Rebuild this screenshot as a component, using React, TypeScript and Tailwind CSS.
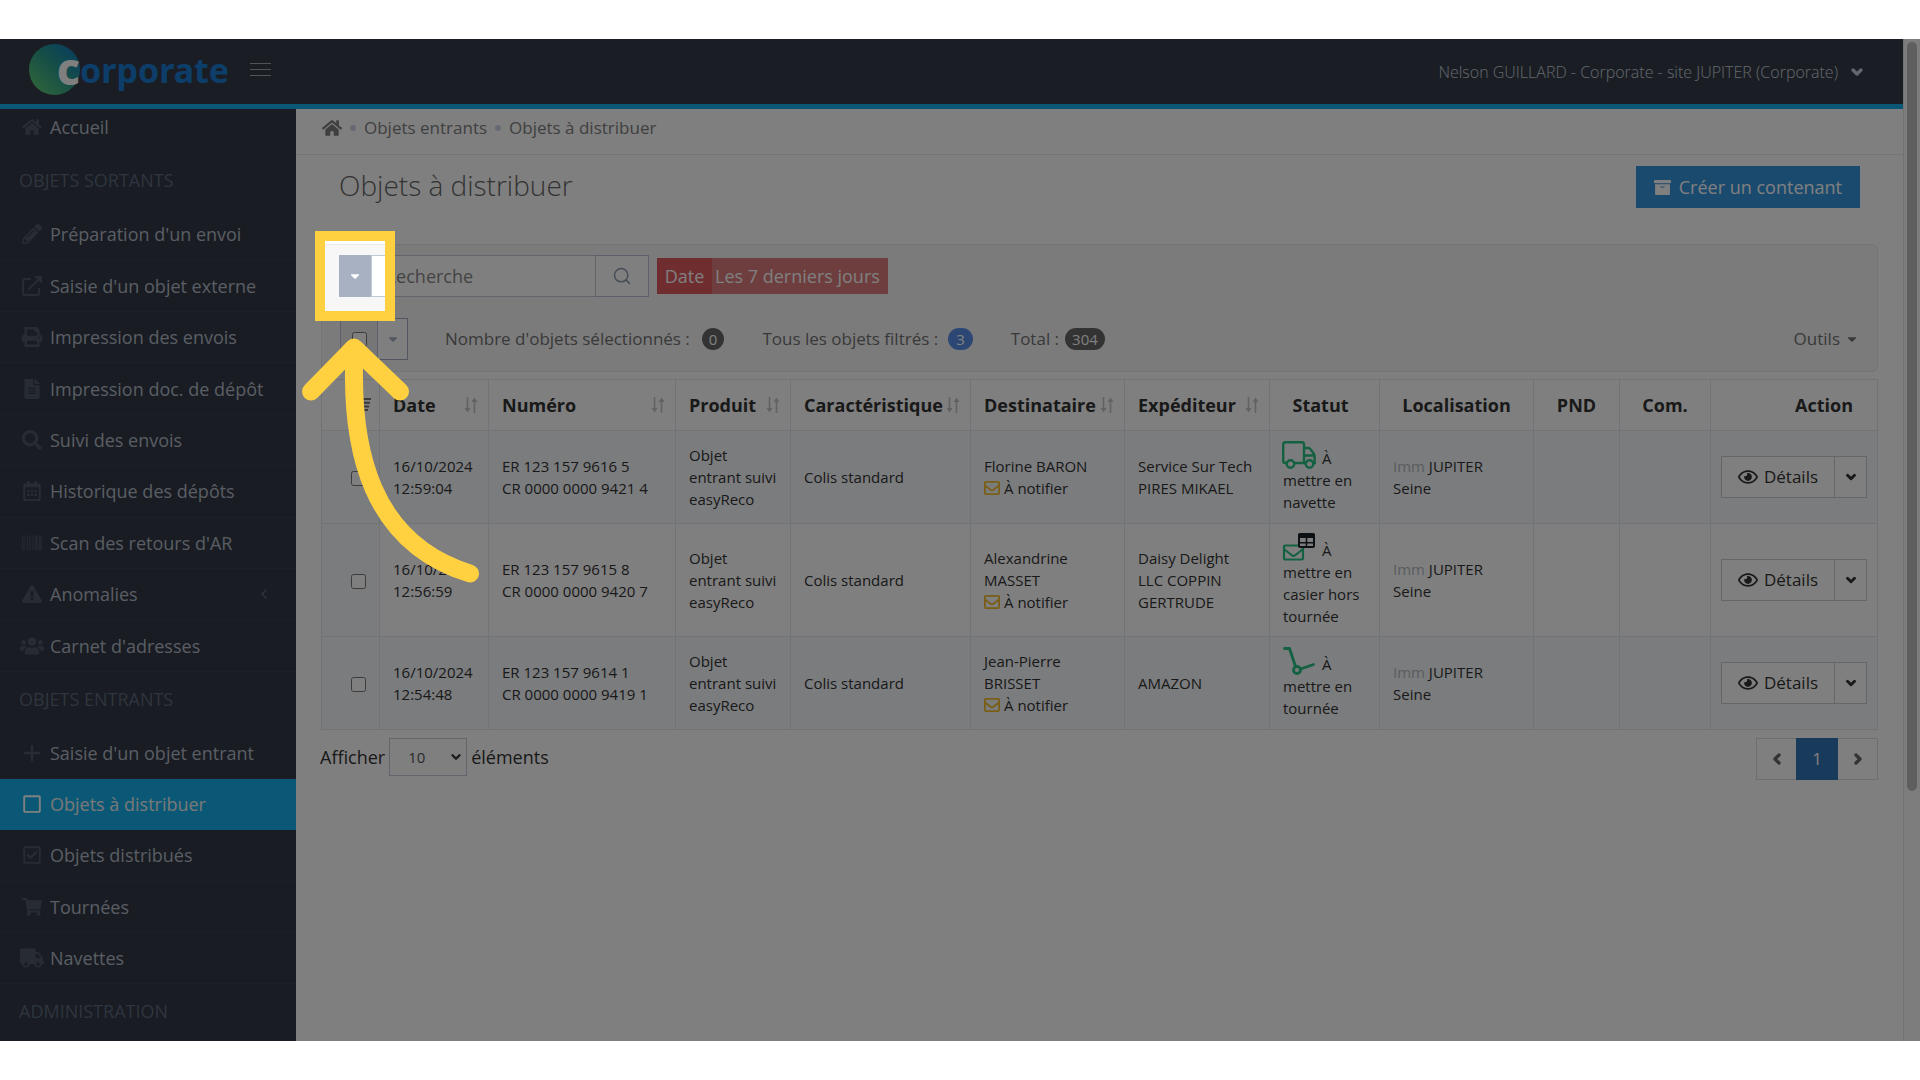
import type { ReactNode } from "react";
import {
  FaArchive,
  FaBarcode,
  FaCaretDown,
  FaExclamationTriangle,
  FaFileAlt,
  FaHome,
  FaPencilAlt,
  FaPrint,
  FaRegCalendarAlt,
  FaRegCheckSquare,
  FaRegEye,
  FaRegSquare,
  FaSearch,
  FaShoppingCart,
  FaTruck,
  FaUsers,
} from "react-icons/fa";
import { FaPlus } from "react-icons/fa6";
import { ChevronDown, ChevronLeft, ChevronRight, Search } from "lucide-react";

type NavEntry = { label: string; icon: ReactNode; active?: boolean; expandable?: boolean };

function ExternalIcon() {
  return (
    <svg viewBox="0 0 20 20" className="size-5" fill="none" stroke="currentColor" strokeWidth="2">
      <path d="M9 3H2.500A1.500 1.500 0 0 0 1 4.500v13A1.500 1.500 0 0 0 2.500 19h13a1.500 1.500 0 0 0 1.500-1.500V12" />
      <path d="M6.500 13.500 17 3" />
      <path d="M12 0h8v8z" fill="currentColor" stroke="none" />
    </svg>
  );
}

function EnvelopeIcon() {
  return (
    <svg viewBox="0 0 16 14" className="inline-block h-[14px] w-4" fill="none" stroke="currentColor" strokeWidth="1.8">
      <rect x="0.9" y="0.9" width="14.200" height="12.200" rx="0.8" />
      <path d="M1 4.500 6.500 8.800a2.500 2.500 0 0 0 3 0L15 4.500" />
    </svg>
  );
}

function SortArrows() {
  return (
    <svg viewBox="0 0 14 16" className="h-4 w-[14px] shrink-0 text-[#c4c4c4]" fill="none" stroke="currentColor" strokeWidth="1.6">
      <path d="M3.500 0v14" />
      <path d="M10.500 16V2" />
      <path d="M0.500 11 3.500 15.500 6.500 11z" fill="currentColor" stroke="none" />
      <path d="M7.500 5 10.500 0.500 13.500 5z" fill="currentColor" stroke="none" />
    </svg>
  );
}

function ShuttleIcon() {
  return (
    <svg viewBox="0 0 34 28" className="inline-block h-7 w-[34px]" fill="none" stroke="currentColor" strokeWidth="2.400">
      <path d="M5 22H3.500A2.300 2.300 0 0 1 1.200 19.700V3.500A2.300 2.300 0 0 1 3.500 1.200h16.300A2.300 2.300 0 0 1 22 3.500V22H12" />
      <path d="M22 7h4.200a2.500 2.500 0 0 1 1.900.8L32 13a2.500 2.500 0 0 1 .6 1.700V22M24 22h-2M22 14.500h10.500M31 22h3" />
      <circle cx="8.500" cy="23" r="3.700" />
      <circle cx="27.500" cy="23" r="3.700" />
    </svg>
  );
}

function LockerIcon() {
  return (
    <svg viewBox="0 0 34 28" className="inline-block h-7 w-[34px]" fill="none">
      <g stroke="currentColor" strokeWidth="2.200">
        <rect x="2" y="12.500" width="19" height="14" rx="1.200" />
        <path d="M2.500 16.500 9.500 22a3 3 0 0 0 4 0L20.500 16.500" />
      </g>
      <rect x="17" y="1" width="15" height="13" rx="1" fill="#fff" stroke="#1b2228" strokeWidth="2" />
      <path d="M16 1h17v4H16z" fill="#1b2228" />
      <path d="M24.500 5v9M17 9.700h15" stroke="#1b2228" strokeWidth="1.600" />
    </svg>
  );
}

function DollyIcon() {
  return (
    <svg viewBox="0 0 34 28" className="inline-block h-7 w-[34px]" fill="none" stroke="currentColor" strokeWidth="2.800" strokeLinecap="round">
      <path d="M2.500 1.500H7.500L13.500 19.500" strokeLinejoin="round" />
      <path d="M18.500 22 31.500 17.500" />
      <circle cx="15" cy="23" r="3.500" />
    </svg>
  );
}

const outgoing: NavEntry[] = [
  { label: "Préparation d'un envoi", icon: <FaPencilAlt /> },
  { label: "Saisie d'un objet externe", icon: <ExternalIcon /> },
  { label: "Impression des envois", icon: <FaPrint /> },
  { label: "Impression doc. de dépôt", icon: <FaFileAlt /> },
  { label: "Suivi des envois", icon: <FaSearch /> },
  { label: "Historique des dépôts", icon: <FaRegCalendarAlt /> },
  { label: "Scan des retours d'AR", icon: <FaBarcode /> },
  { label: "Anomalies", icon: <FaExclamationTriangle />, expandable: true },
  { label: "Carnet d'adresses", icon: <FaUsers className="size-6" /> },
];

const incoming: NavEntry[] = [
  { label: "Saisie d'un objet entrant", icon: <FaPlus /> },
  { label: "Objets à distribuer", icon: <FaRegSquare />, active: true },
  { label: "Objets distribués", icon: <FaRegCheckSquare /> },
  { label: "Tournées", icon: <FaShoppingCart /> },
  { label: "Navettes", icon: <FaTruck className="size-6" /> },
];

function NavLink({ entry }: { entry: NavEntry }) {
  return (
    <li className={entry.active ? "bg-[#15b1ec]" : "border-b border-[#3a4150]"}>
      <a
        href="#"
        className={
          entry.active
            ? "flex h-full items-center gap-[6px] pr-6 pb-0.5 pl-5 text-[#f1f1f1]"
            : "flex h-full items-center gap-[6px] pr-6 pl-5 text-[#b4bcc8]"
        }
      >
        <span
          className={
            entry.active
              ? "flex w-6 shrink-0 justify-center text-xl text-white"
              : "flex w-6 shrink-0 justify-center text-xl text-[#4f5866]"
          }
        >
          {entry.icon}
        </span>
        <span className="flex-1 whitespace-nowrap">{entry.label}</span>
        {entry.expandable && <ChevronLeft className="size-4 text-[#606c7d]" strokeWidth={2} />}
      </a>
    </li>
  );
}

function NavHeading({ children }: { children: ReactNode }) {
  return <h3 className="flex h-14 items-center px-[19px] pb-0.5 text-[#5d6a7d]">{children}</h3>;
}

type Row = {
  time: string;
  er: string;
  cr: string;
  recipient: ReactNode;
  sender: ReactNode;
  icon: ReactNode;
  status: ReactNode;
};

const rows: Row[] = [
  {
    time: "12:59:04",
    er: "ER 123 157 9616 5",
    cr: "CR 0000 0000 9421 4",
    recipient: "Florine BARON",
    sender: <>Service Sur Tech<br />PIRES MIKAEL</>,
    icon: <ShuttleIcon />,
    status: <>mettre en<br />navette</>,
  },
  {
    time: "12:56:59",
    er: "ER 123 157 9615 8",
    cr: "CR 0000 0000 9420 7",
    recipient: <>Alexandrine<br />MASSET</>,
    sender: <>Daisy Delight<br />LLC COPPIN<br />GERTRUDE</>,
    icon: <LockerIcon />,
    status: <>mettre en<br />casier hors<br />tournée</>,
  },
  {
    time: "12:54:48",
    er: "ER 123 157 9614 1",
    cr: "CR 0000 0000 9419 1",
    recipient: <>Jean-Pierre<br />BRISSET</>,
    sender: "AMAZON",
    icon: <DollyIcon />,
    status: <>mettre en<br />tournée</>,
  },
];

function SortableHead({ children }: { children: ReactNode }) {
  return (
    <th scope="col" className="border border-[#e2e7ec] pr-[10px] pl-[13px] font-bold">
      <span className="flex items-center justify-between">
        {children}
        <SortArrows />
      </span>
    </th>
  );
}

function Guide() {
  return (
    <>
      <div className="pointer-events-none absolute -inset-6 z-40 border-10 border-[#ffd140] shadow-[0_0_0_2400px_rgba(0,0,0,0.5)]" />
      <svg
        viewBox="300 335 182 252"
        className="pointer-events-none absolute top-20 -left-[39px] z-50 h-[252px] w-[182px]"
        fill="none"
        stroke="#ffd140"
        strokeWidth="18"
        strokeLinecap="round"
        strokeLinejoin="round"
      >
        <path d="M311 391.500 354 347.500 400 391.500" />
        <path d="M354.500 352C350 450 371 543 470 573.500" />
      </svg>
    </>
  );
}

export default function App() {
  return (
    <div className="min-h-screen bg-white py-[39px] font-['Open_Sans',sans-serif] text-lg leading-6">
      <div className="relative isolate flex overflow-hidden">
        <div className="flex min-w-0 flex-1 flex-col">
          <header className="flex h-[70px] items-center justify-between border-b-5 border-[#15b1ec] bg-[#343c49] pr-[38px] pl-[29px]">
            <div className="flex items-center gap-[21px] pb-1">
              <a href="#" aria-label="Corporate" className="flex items-center font-['Noto_Sans','Open_Sans',sans-serif] font-bold">
                <span className="flex size-[51px] items-center justify-end rounded-full bg-linear-to-tr from-[#6ad46a] via-[#2f9f8a] to-[#1673c4] text-[44px] leading-8 font-extrabold text-white">
                  <span className="mb-1">c</span>
                </span>
                <span className="text-[34px] leading-10 text-[#1b7cd4]">orporate</span>
              </a>
              <button type="button" aria-label="Menu" className="flex w-[21px] flex-col gap-[5px]">
                <span className="h-px bg-[#a0a6b0]" />
                <span className="h-px bg-[#a0a6b0]" />
                <span className="h-px bg-[#a0a6b0]" />
              </button>
            </div>
            <button type="button" className="flex items-center gap-[11px] text-base font-light text-[#c6cfda]">
              Nelson GUILLARD - Corporate - site JUPITER (Corporate)
              <ChevronDown className="size-4" strokeWidth={5} />
            </button>
          </header>

          <div className="flex flex-1">
            <nav className="w-[296px] shrink-0 bg-[#323846] pb-px">
              <a href="#" className="flex h-11 items-center gap-[6px] pb-2 pl-5 text-[#b4bcc8]">
                <span className="flex w-6 justify-center text-xl text-[#4f5866]">
                  <FaHome />
                </span>
                Accueil
              </a>
              <NavHeading>OBJETS SORTANTS</NavHeading>
              <ul className="grid min-h-[463px] auto-rows-fr">
                {outgoing.map((e) => (
                  <NavLink key={e.label} entry={e} />
                ))}
              </ul>
              <NavHeading>OBJETS ENTRANTS</NavHeading>
              <ul className="grid min-h-[256px] auto-rows-fr">
                {incoming.map((e) => (
                  <NavLink key={e.label} entry={e} />
                ))}
              </ul>
              <NavHeading>ADMINISTRATION</NavHeading>
            </nav>

            <main className="min-w-0 flex-1 bg-white px-[25px]">
              <div className="-mx-[25px] flex h-[46px] items-center gap-2 border-b border-[#e7ecf1] px-[26px] pb-2 text-[17px] text-[#7f7f7f]">
                <a href="#" aria-label="Accueil">
                  <FaHome className="size-5" />
                </a>
                <span className="size-1.5 rounded-full bg-[#cbd4e0]" />
                <a href="#">Objets entrants</a>
                <span className="size-1.5 rounded-full bg-[#cbd4e0]" />
                <span>Objets à distribuer</span>
              </div>

              <div className="flex items-start justify-between pt-[11px] pr-[18px] pl-[18px]">
                <h1 className="text-[28px] leading-[38px] font-light text-[#666]">Objets à distribuer</h1>
                <button type="button" className="flex h-[42px] items-center gap-2 bg-[#3594dc] px-[18px] text-white">
                  <FaArchive className="size-[17px]" />
                  Créer un contenant
                </button>
              </div>

              <section className="mt-9 rounded-md border border-[#e9e9e9] bg-[#f7f7f7] pt-[10px] pr-[18px] pb-[11px] pl-[17px] text-[#737373]">
                <div className="flex items-center">
                  <div className="flex h-[42px]">
                    <div className="relative flex">
                      <button
                        type="button"
                        aria-label="Filtres"
                        className="flex w-8 items-center justify-center border border-[#a8b1c2] bg-[#a8b1c2] text-white"
                      >
                        <FaCaretDown className="size-3.5" />
                      </button>
                      <Guide />
                    </div>
                    <input
                      type="text"
                      aria-label="Recherche"
                      placeholder="Recherche"
                      className="w-[225px] border border-[#c2cad8] bg-white px-[13px] placeholder:text-[#888]"
                    />
                    <button
                      type="button"
                      aria-label="Rechercher"
                      className="flex w-[53px] items-center justify-center border border-l-0 border-[#b9c1d0] bg-white text-[#8f9aad]"
                    >
                      <Search className="size-5" strokeWidth={1.8} />
                    </button>
                  </div>
                  <button type="button" className="ml-2 flex h-9 items-center bg-[#dc7a7c] text-white">
                    <span className="flex h-full w-[55px] items-center justify-center bg-[#de5a5f]">Date</span>
                    <span className="pr-2 pl-[3px]">Les 7 derniers jours</span>
                  </button>
                </div>

                <div className="mt-[21px] flex items-center text-[17px]">
                  <div className="ml-px flex h-[42px]">
                    <label className="flex w-[38px] items-center justify-center border border-[#b9c1d0] bg-[#ececec]">
                      <input type="checkbox" aria-label="Tout sélectionner" className="size-[15px]" />
                    </label>
                    <button
                      type="button"
                      aria-label="Options de sélection"
                      className="flex w-[30px] items-center justify-center border border-l-0 border-[#a4adbf] bg-white text-[#a4adbf]"
                    >
                      <FaCaretDown className="size-3.5" />
                    </button>
                  </div>
                  <span className="ml-[37px]">Nombre d'objets sélectionnés :</span>
                  <span className="ml-3 rounded-full bg-[#666] px-[7px] text-[15px] leading-[22px] text-white">0</span>
                  <span className="ml-[38px]">Tous les objets filtrés :</span>
                  <span className="ml-[10px] rounded-full bg-[#588fe6] px-[8px] text-[15px] leading-[22px] text-white">3</span>
                  <span className="ml-[38px]">Total :</span>
                  <span className="ml-[6px] rounded-full bg-[#666] px-[7px] text-[15px] leading-[22px] text-white">304</span>
                  <button type="button" className="ml-auto flex items-center gap-[5px]">
                    Outils
                    <FaCaretDown className="size-3.5" />
                  </button>
                </div>
              </section>

              <table className="mt-[7px] w-full table-fixed border-collapse text-[15px] leading-[22px] text-[#333]">
                <colgroup>
                  <col className="w-[58px]" />
                  <col className="w-[109px]" />
                  <col className="w-[187px]" />
                  <col className="w-[115px]" />
                  <col />
                  <col className="w-[154px]" />
                  <col className="w-[145px]" />
                  <col className="w-[110px]" />
                  <col className="w-[154px]" />
                  <col className="w-[86px]" />
                  <col className="w-[91px]" />
                  <col className="w-[167px]" />
                </colgroup>
                <thead>
                  <tr className="h-[51px] text-left text-lg">
                    <th scope="col" aria-label="Sélection" className="border border-[#e2e7ec]">
                      <svg viewBox="0 0 14 14" className="mr-2 ml-auto size-3.5" stroke="#777" strokeWidth="2">
                        <path d="M0 1h14M2 4.700h11M4 8.400h8M6 12h5" />
                      </svg>
                    </th>
                    <SortableHead>Date</SortableHead>
                    <SortableHead>Numéro</SortableHead>
                    <SortableHead>Produit</SortableHead>
                    <SortableHead>Caractéristique</SortableHead>
                    <SortableHead>Destinataire</SortableHead>
                    <SortableHead>Expéditeur</SortableHead>
                    <th scope="col" className="border border-[#e2e7ec] pr-2 text-center">Statut</th>
                    <th scope="col" className="border border-[#e2e7ec] text-center">Localisation</th>
                    <th scope="col" className="border border-[#e2e7ec] text-center">PND</th>
                    <th scope="col" className="border border-[#e2e7ec] text-center">Com.</th>
                    <th scope="col" className="border border-[#e2e7ec] pr-6 text-right">Action</th>
                  </tr>
                </thead>
                <tbody>
                  {rows.map((r) => (
                    <tr key={r.time} className="h-[93px] odd:bg-[#f7f9fc]">
                      <td className="border border-[#e2e7ec] bg-[#f7f9fc] pl-4 text-center">
                        <input type="checkbox" aria-label={r.er} className="size-[15px] align-middle" />
                      </td>
                      <td className="border border-[#e2e7ec] pl-[13px]">16/10/2024<br />{r.time}</td>
                      <td className="border border-[#e2e7ec] pl-[13px]">{r.er}<br />{r.cr}</td>
                      <td className="border border-[#e2e7ec] pl-[13px]">Objet<br />entrant suivi<br />easyReco</td>
                      <td className="border border-[#e2e7ec] pl-[13px]">Colis standard</td>
                      <td className="border border-[#e2e7ec] pl-[13px]">
                        {r.recipient}
                        <div className="flex items-center gap-1">
                          <span className="flex text-[#f3bd2c]">
                            <EnvelopeIcon />
                          </span>
                          À notifier
                        </div>
                      </td>
                      <td className="border border-[#e2e7ec] pl-[13px]">{r.sender}</td>
                      <td className="border border-[#e2e7ec] py-[9px] pl-3">
                        <div className="flex items-end gap-[6px]">
                          <span className="flex text-[#26c281]">{r.icon}</span>
                          À
                        </div>
                        <div className="pl-px">{r.status}</div>
                      </td>
                      <td className="border border-[#e2e7ec] pl-[13px]">
                        <span className="text-[#b3babf]">Imm</span> JUPITER<br />Seine
                      </td>
                      <td className="border border-[#e2e7ec]" />
                      <td className="border border-[#e2e7ec]" />
                      <td className="border border-[#e2e7ec]">
                        <div className="mr-[10px] ml-auto flex h-[42px] w-[146px] border border-[#ccc] bg-white text-[17px]">
                          <button type="button" className="flex flex-1 items-center justify-center gap-[6px]">
                            <FaRegEye className="size-5" />
                            Détails
                          </button>
                          <button
                            type="button"
                            aria-label="Plus d'actions"
                            className="flex w-8 items-center justify-center border-l border-[#ccc]"
                          >
                            <ChevronDown className="size-3.5" strokeWidth={5} />
                          </button>
                        </div>
                      </td>
                    </tr>
                  ))}
                </tbody>
              </table>

              <div className="mt-2 flex items-start justify-between text-[#333]">
                <label className="-ml-px flex items-center gap-1">
                  Afficher
                  <span className="relative flex">
                    <select className="h-[38px] w-[78px] appearance-none border border-[#c2cad8] bg-white pl-[18px] text-[15px] text-[#555]">
                      <option>10</option>
                    </select>
                    <ChevronDown className="pointer-events-none absolute top-3 right-1 size-3.5" strokeWidth={4} />
                  </span>
                  éléments
                </label>
                <div className="flex h-[42px] border border-[#ddd] text-[#666]">
                  <button type="button" aria-label="Précédent" className="flex w-[39px] items-center justify-center">
                    <ChevronLeft className="size-4" strokeWidth={5} />
                  </button>
                  <button type="button" className="-my-px w-[42px] bg-[#3376b6] text-[17px] text-white">1</button>
                  <button type="button" aria-label="Suivant" className="flex w-[39px] items-center justify-center">
                    <ChevronRight className="size-4" strokeWidth={5} />
                  </button>
                </div>
              </div>
            </main>
          </div>
        </div>

        <div className="w-[17px] border-l border-[#e4e4e4] bg-[#fafafa] px-[3px] pt-[3px]">
          <div className="h-3/4 rounded-full bg-[#bebebe]" />
        </div>
      </div>
    </div>
  );
}
